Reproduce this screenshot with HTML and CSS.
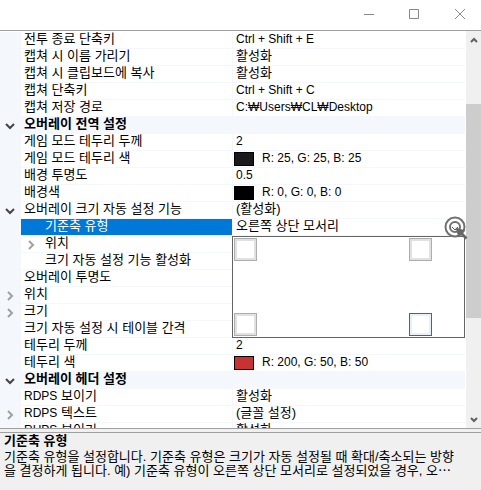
FILE: index.html
```
<!DOCTYPE html>
<html lang="ko">
<head>
<meta charset="utf-8">
<title>오버레이 설정</title>
<link rel="stylesheet" href="styles.css">
</head>
<body>
<header class="titlebar">
  <button class="winbtn" aria-label="최소화"><svg width="12" height="12" viewBox="0 0 12 12"><path d="M1 6.500h10"/></svg></button>
  <button class="winbtn" aria-label="최대화"><svg width="12" height="12" viewBox="0 0 12 12"><path d="M1.500 1.500h9v9h-9z"/></svg></button>
  <button class="winbtn" aria-label="닫기"><svg width="12" height="12" viewBox="0 0 12 12"><path d="M1 1l10 10M11 1L1 11"/></svg></button>
</header>
<main class="grid">
  <div class="list">
    <table class="props">
      <colgroup><col class="c-gutter"><col class="c-name"><col></colgroup>
      <tbody>
        <tr><td class="gutter"></td><th scope="row">전투 종료 단축키</th><td class="latin">Ctrl + Shift + E</td></tr>
        <tr><td class="gutter"></td><th scope="row">캡쳐 시 이름 가리기</th><td>활성화</td></tr>
        <tr><td class="gutter"></td><th scope="row">캡쳐 시 클립보드에 복사</th><td>활성화</td></tr>
        <tr><td class="gutter"></td><th scope="row">캡쳐 단축키</th><td class="latin">Ctrl + Shift + C</td></tr>
        <tr><td class="gutter"></td><th scope="row">캡쳐 저장 경로</th><td class="latin">C:₩Users₩CL₩Desktop</td></tr>
        <tr class="category"><td class="gutter"><button class="expander open" aria-label="접기"><svg width="10" height="10" viewBox="0 0 10 10"><path d="M1 3l4 4 4-4"/></svg></button></td><th colspan="2">오버레이 전역 설정</th></tr>
        <tr><td class="gutter"></td><th scope="row">게임 모드 테두리 두께</th><td class="latin">2</td></tr>
        <tr><td class="gutter"></td><th scope="row">게임 모드 테두리 색</th><td class="latin"><div class="color"><span class="swatch dark"></span>R: 25, G: 25, B: 25</div></td></tr>
        <tr><td class="gutter"></td><th scope="row">배경 투명도</th><td class="latin">0.5</td></tr>
        <tr><td class="gutter"></td><th scope="row">배경색</th><td class="latin"><div class="color"><span class="swatch black"></span>R: 0, G: 0, B: 0</div></td></tr>
        <tr><td class="gutter"><button class="expander open" aria-label="접기"><svg width="10" height="10" viewBox="0 0 10 10"><path d="M1 3l4 4 4-4"/></svg></button></td><th scope="row">오버레이 크기 자동 설정 기능</th><td>(활성화)</td></tr>
        <tr class="selected"><td class="gutter"></td><th scope="row" class="child">기준축 유형</th><td class="anchor">오른쪽 상단 모서리
          <div class="dropdown">
            <button class="corner" aria-label="왼쪽 상단"></button><button class="corner" aria-label="오른쪽 상단"></button>
            <button class="corner" aria-label="왼쪽 하단"></button><button class="corner active" aria-label="오른쪽 하단"></button>
          </div>
          <svg class="pointer" width="26" height="26" viewBox="0 0 26 26"><circle class="halo" cx="12" cy="12" r="10.500"/><circle class="ring" cx="12" cy="12" r="9.500"/><circle class="ring" cx="12" cy="12" r="5"/><path class="check" d="M9 12l3 3 3-3"/><path class="arrow" d="M12.500 12.500l10 3-3 2 5 5-2 2-5-5-2 3z"/></svg>
        </td></tr>
        <tr><td class="gutter"></td><th scope="row" class="child"><button class="expander nested" aria-label="펼치기"><svg width="10" height="10" viewBox="0 0 10 10"><path d="M3 1l4 4-4 4"/></svg></button>위치</th><td></td></tr>
        <tr><td class="gutter"></td><th scope="row" class="child">크기 자동 설정 기능 활성화</th><td></td></tr>
        <tr><td class="gutter"></td><th scope="row">오버레이 투명도</th><td></td></tr>
        <tr><td class="gutter"><button class="expander" aria-label="펼치기"><svg width="10" height="10" viewBox="0 0 10 10"><path d="M3 1l4 4-4 4"/></svg></button></td><th scope="row">위치</th><td></td></tr>
        <tr><td class="gutter"><button class="expander" aria-label="펼치기"><svg width="10" height="10" viewBox="0 0 10 10"><path d="M3 1l4 4-4 4"/></svg></button></td><th scope="row">크기</th><td></td></tr>
        <tr><td class="gutter"></td><th scope="row">크기 자동 설정 시 테이블 간격</th><td></td></tr>
        <tr><td class="gutter"></td><th scope="row">테두리 두께</th><td class="latin">2</td></tr>
        <tr><td class="gutter"></td><th scope="row">테두리 색</th><td class="latin"><div class="color"><span class="swatch red"></span>R: 200, G: 50, B: 50</div></td></tr>
        <tr class="category"><td class="gutter"><button class="expander open" aria-label="접기"><svg width="10" height="10" viewBox="0 0 10 10"><path d="M1 3l4 4 4-4"/></svg></button></td><th colspan="2">오버레이 헤더 설정</th></tr>
        <tr><td class="gutter"></td><th scope="row"><span class="latin">RDPS</span> 보이기</th><td>활성화</td></tr>
        <tr><td class="gutter"><button class="expander" aria-label="펼치기"><svg width="10" height="10" viewBox="0 0 10 10"><path d="M3 1l4 4-4 4"/></svg></button></td><th scope="row"><span class="latin">RDPS</span> 텍스트</th><td>(글꼴 설정)</td></tr>
        <tr><td class="gutter"></td><th scope="row"><span class="latin">RHPS</span> 보이기</th><td>활성화</td></tr>
      </tbody>
    </table>
  </div>
  <div class="scrollbar">
    <button class="arrow-btn" aria-label="위로"><svg width="10" height="10" viewBox="0 0 10 10"><path d="M2 7l3-3 3 3"/></svg></button>
    <div class="track"><div class="thumb"></div></div>
    <button class="arrow-btn" aria-label="아래로"><svg width="10" height="10" viewBox="0 0 10 10"><path d="M2 3l3 3 3-3"/></svg></button>
  </div>
</main>
<div class="splitter"></div>
<footer class="help">
  <h2>기준축 유형</h2>
  <p>기준축 유형을 설정합니다. 기준축 유형은 크기가 자동 설정될 때 확대/축소되는 방향<br>을 결정하게 됩니다. 예) 기준축 유형이 오른쪽 상단 모서리로 설정되었을 경우, 오⋯</p>
</footer>
</body>
</html>
```
FILE: styles.css
```
* { box-sizing: border-box; }
body {
  margin: 0;
  height: 100vh;
  display: flex;
  flex-direction: column;
  overflow: hidden;
  background: #fff;
  color: #000;
  font: 13px/14px "Liberation Sans", "Noto Sans CJK KR", sans-serif;
}
button { padding: 0; border: 0; background: none; }
svg { display: block; fill: none; }

.titlebar {
  flex: none;
  height: 31px;
  display: flex;
  justify-content: flex-end;
  border-bottom: 1px solid #a0a0a0;
}
.winbtn { width: 45px; padding-bottom: 2px; display: grid; place-items: center; }
.winbtn svg { stroke: #888; }
.winbtn:last-child { padding-left: 2px; }

.grid { flex: 1; min-height: 0; display: flex; overflow: hidden; }
.list { flex: 1; min-width: 0; padding: 1px 1px 0 0; position: relative; z-index: 1; }
.props { width: 100%; table-layout: fixed; border-spacing: 0; }
.c-gutter { width: 21px; }
.c-name { width: 212px; }
.props th, .props td {
  height: 17px;
  padding: 0 0 2px 3px;
  border-bottom: 1px solid #f4f7fc;
  font-weight: normal;
  text-align: left;
  vertical-align: top;
  white-space: nowrap;
}
.props th { position: relative; border-right: 1px solid #f4f7fc; }
.props .gutter { padding: 4px 0 0 5px; background: #f4f7fc; }
.props .child { padding-left: 24px; }
.props .category th { font-weight: bold; background: #f4f7fc; }
.selected th { background: #0078d7; background-clip: padding-box; color: #fff; }
.latin { font-size: 12px; }

.expander { display: block; height: 10px; }
.expander svg { stroke: #a0a0a0; stroke-width: 2; }
.expander.open svg { stroke: #444; }
.expander.nested { position: absolute; left: 5px; top: 4px; }

.color { display: flex; gap: 8px; margin-left: -2px; height: 14px; }
.swatch { width: 20px; height: 14px; margin-top: 1px; border: 1px solid #000; }
.dark { background: #191919; }
.black { background: #000; }
.red { background: #c83232; }

.props .anchor { position: relative; z-index: 1; }
.dropdown {
  position: absolute;
  left: -1px;
  right: 0;
  top: 17px;
  height: 102px;
  padding: 1px 32px 1px 1px;
  display: grid;
  grid-template-columns: 23px 23px;
  justify-content: space-between;
  align-content: space-between;
  background: #fff;
  border: 1px solid #646464;
}
.corner { width: 23px; height: 23px; background: #fff; border: 1px solid #adadad; box-shadow: inset 0 0 0 2px #e1e1e1; }
.corner.active { border-color: #0078d7; box-shadow: inset 0 0 0 2px #e5f1fb; }
.pointer { position: absolute; right: -4px; top: -4px; }
.halo { fill: #fff; fill-opacity: .6; }
.ring { stroke: #707070; stroke-width: 2; }
.check { stroke: #555; }
.arrow { fill: #666; }

.scrollbar { width: 15px; display: flex; flex-direction: column; background: #f0f0f0; }
.arrow-btn { height: 17px; display: grid; place-items: center; }
.arrow-btn svg { stroke: #606060; stroke-width: 2; }
.track { flex: 1; padding-top: 56px; }
.thumb { height: 214px; background: #cdcdcd; }

.splitter { flex: none; height: 5px; background: #f0f0f0; border: solid #a0a0a0; border-width: 1px 0; }
.help { flex: none; height: 57px; padding: 1px 4px; background: #f0f0f0; white-space: nowrap; }
.help h2 { margin: 0 0 2px; font-size: 13px; line-height: 14px; }
.help p { margin: 0; }
```
